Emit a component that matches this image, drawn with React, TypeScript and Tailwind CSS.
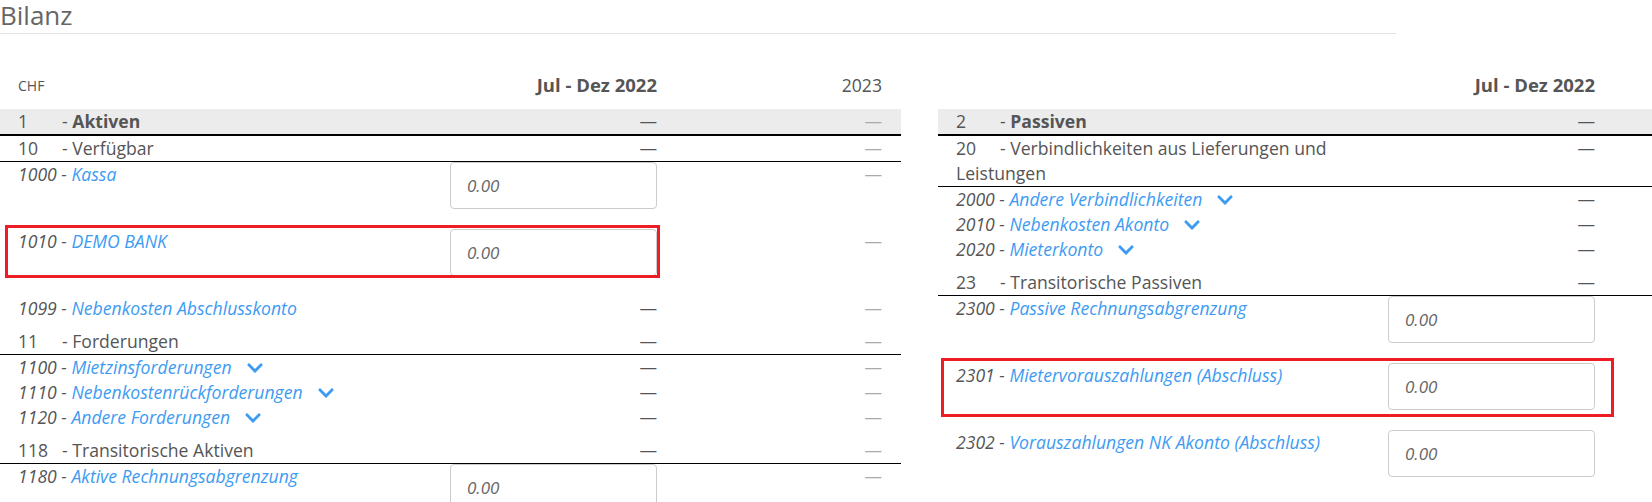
import { FaChevronDown } from "react-icons/fa";

type Row = {
  kind: "head" | "group" | "item" | "input";
  num: string;
  label: string;
  chevron?: boolean;
  gap?: boolean;
  mark?: "left" | "right";
};

const aktiven: Row[] = [
  { kind: "head", num: "1", label: "Aktiven" },
  { kind: "group", num: "10", label: "Verfügbar" },
  { kind: "input", num: "1000", label: "Kassa" },
  { kind: "input", num: "1010", label: "DEMO BANK", mark: "left" },
  { kind: "item", num: "1099", label: "Nebenkosten Abschlusskonto" },
  { kind: "group", num: "11", label: "Forderungen", gap: true },
  { kind: "item", num: "1100", label: "Mietzinsforderungen", chevron: true },
  { kind: "item", num: "1110", label: "Nebenkostenrückforderungen", chevron: true },
  { kind: "item", num: "1120", label: "Andere Forderungen", chevron: true },
  { kind: "group", num: "118", label: "Transitorische Aktiven", gap: true },
  { kind: "input", num: "1180", label: "Aktive Rechnungsabgrenzung" },
];

const passiven: Row[] = [
  { kind: "head", num: "2", label: "Passiven" },
  { kind: "group", num: "20", label: "Verbindlichkeiten aus Lieferungen und Leistungen" },
  { kind: "item", num: "2000", label: "Andere Verbindlichkeiten", chevron: true },
  { kind: "item", num: "2010", label: "Nebenkosten Akonto", chevron: true },
  { kind: "item", num: "2020", label: "Mieterkonto", chevron: true },
  { kind: "group", num: "23", label: "Transitorische Passiven", gap: true },
  { kind: "input", num: "2300", label: "Passive Rechnungsabgrenzung" },
  { kind: "input", num: "2301", label: "Mietervorauszahlungen (Abschluss)", mark: "right" },
  { kind: "input", num: "2302", label: "Vorauszahlungen NK Akonto (Abschluss)" },
];

const Dash = ({ light }: { light?: boolean }) => (
  <span className={light ? "text-[#aaa]" : "text-[#555]"}>—</span>
);

// the right hand table is cut off by the window, its 2023 column stays empty
const BalanceRow = ({ row, prior }: { row: Row; prior: boolean }) => {
  if (row.kind === "input") {
    return (
      <div className="relative grid grid-cols-[432px_244px_225px] mb-5 h-[47px]">
        <div className="pl-[18px] pr-[18px] leading-[25px] italic">
          <span className="text-[#555]">{row.num} - </span>
          <a className="text-[#3d9bf2] cursor-pointer">{row.label}</a>
        </div>
        <div className="flex justify-end pr-[19px]">
          <input
            placeholder="0.00"
            className="w-[207px] h-[47px] rounded border border-[#ccc] pl-4 pr-3 text-[17px] italic text-[#555] placeholder:text-[#666] outline-none"
          />
        </div>
        <div className="pr-[19px] text-right leading-[25px]">{prior && <Dash light />}</div>
        {row.mark === "left" && (
          <div className="absolute left-[5px] top-[-4px] w-[655px] h-[53px] border-[3px] border-[#ee1c25] pointer-events-none" />
        )}
        {row.mark === "right" && (
          <div className="absolute left-[3px] top-[-5px] w-[673px] h-[59px] border-[3px] border-[#ee1c25] pointer-events-none" />
        )}
      </div>
    );
  }

  if (row.kind === "item") {
    return (
      <div className="grid grid-cols-[432px_244px_225px] leading-[25px]">
        <div className="pl-[18px] pr-[18px] italic flex items-center">
          <span className="text-[#555] whitespace-pre">{row.num} - </span>
          <a className="text-[#3d9bf2] cursor-pointer">{row.label}</a>
          {row.chevron && <FaChevronDown className="ml-[14px] text-[#3d9bf2]" size={18} />}
        </div>
        <div className="pr-[19px] text-right">
          <Dash />
        </div>
        <div className="pr-[19px] text-right">{prior && <Dash light />}</div>
      </div>
    );
  }

  const isHead = row.kind === "head";
  return (
    <div
      className={`grid grid-cols-[432px_244px_225px] leading-[25px] ${
        isHead ? "bg-[#ececec] border-b-2 border-black" : "border-b border-black"
      } ${row.gap ? "mt-2" : ""}`}
    >
      <div className="pl-[18px] pr-[18px] text-[#555]">
        <span className="inline-block w-[44px]">{row.num}</span>-{" "}
        {isHead ? <b className="font-bold">{row.label}</b> : row.label}
      </div>
      <div className="pr-[19px] text-right">
        <Dash />
      </div>
      <div className="pr-[19px] text-right">{prior && <Dash light />}</div>
    </div>
  );
};

const BalanceTable = ({ rows, currency, prior = true }: { rows: Row[]; currency?: string; prior?: boolean }) => (
  <div className="w-[901px] shrink-0">
    <div className="grid grid-cols-[432px_244px_225px] items-end pt-[39px] pb-3 h-[75px] text-[#555]">
      <div className="pl-[18px] text-[14px] leading-[22px]">{currency}</div>
      <div className="pr-[19px] text-right font-bold text-[18.5px] leading-[24px]">Jul - Dez 2022</div>
      <div className="pr-[19px] text-right leading-[24px]">{prior && "2023"}</div>
    </div>
    {rows.map((row) => (
      <BalanceRow key={row.num} row={row} prior={prior} />
    ))}
  </div>
);

export default function App() {
  return (
    <div className="w-[1652px] h-[502px] overflow-hidden bg-white text-[17.6px] font-['Open_Sans',sans-serif]">
      <div className="w-[1396px] h-[34px] border-b border-[#e3e3e3]">
        <h1 className="text-[26px] leading-[30px] text-[#666] font-normal">Bilanz</h1>
      </div>
      <div className="flex gap-[37px]">
        <BalanceTable rows={aktiven} currency="CHF" />
        <BalanceTable rows={passiven} prior={false} />
      </div>
    </div>
  );
}
